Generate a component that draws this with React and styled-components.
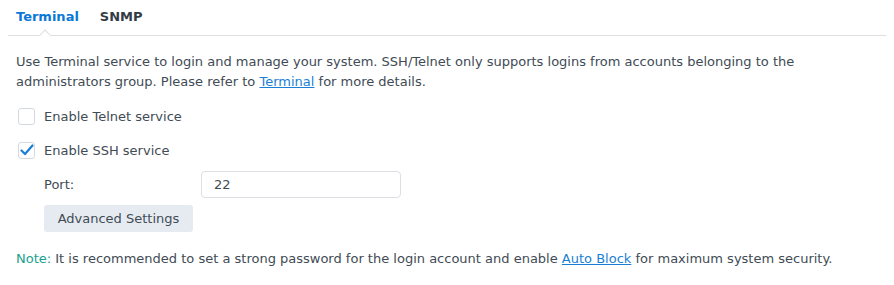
import React from "react";
import styled, { createGlobalStyle } from "styled-components";

const Global = createGlobalStyle`
  html, body { margin: 0; padding: 0; background: #fff; }
  body { font-family: "DejaVu Sans", Verdana, sans-serif; font-size: 13px; color: #414b55; }
`;

const Page = styled.div`
  width: 894px;
  height: 285px;
  padding: 0 8px;
  box-sizing: border-box;
`;

const TabBar = styled.div`
  display: flex;
  gap: 21px;
  height: 36px;
  padding: 8px 8px 0;
  box-sizing: border-box;
  border-bottom: 1px solid #dde0e3;
  width: 878px;
`;

const Tab = styled.div`
  position: relative;
  font-weight: bold;
  font-size: 13px;
  line-height: 18px;
  color: ${(p) => (p.$active ? "#0a78d6" : "#333c45")};
`;

const Notch = styled.span`
  position: absolute;
  left: 25px;
  top: 23px;
  width: 7px;
  height: 7px;
  background: #fff;
  border-left: 1px solid #dde0e3;
  border-top: 1px solid #dde0e3;
  transform: rotate(45deg);
`;

const Body = styled.div`
  padding: 16px 8px 0;
  display: flex;
  flex-direction: column;
`;

const Para = styled.p`
  margin: 0;
  line-height: 20px;
  width: 860px;
`;

const Link = styled.a`
  color: #1a7fd4;
  text-decoration: underline;
`;

const CheckRow = styled.label`
  display: flex;
  align-items: center;
  gap: 9px;
  height: 20px;
  margin-top: ${(p) => p.$mt}px;
  padding-left: 2px;
`;

const Box = styled.span`
  width: 15px;
  height: 15px;
  border: 1px solid #d4d9de;
  border-radius: 3px;
  display: flex;
  align-items: center;
  justify-content: center;
  background: #fff;
`;

const FieldRow = styled.div`
  display: flex;
  align-items: center;
  margin-top: 11px;
  padding-left: 28px;
`;

const FieldLabel = styled.span`
  width: 157px;
`;

const Input = styled.div`
  display: flex;
  align-items: center;
  padding-left: 12px;
  box-sizing: border-box;
  width: 200px;
  height: 27px;
  border: 1px solid #dcdfe3;
  border-radius: 4px;
`;

const Button = styled.button`
  margin: 7px 0 0 28px;
  align-self: flex-start;
  width: 149px;
  height: 27px;
  border: none;
  border-radius: 3px;
  background: #e6ebf1;
  font-family: inherit;
  font-size: 13px;
  color: #414b55;
`;

const Note = styled.p`
  margin: 17px 0 0;
  line-height: 20px;
`;

const NoteLabel = styled.span`
  color: #1aa192;
`;

export default function App() {
  return (
    <>
      <Global />
      <Page>
        <TabBar>
          <Tab $active>
            Terminal
            <Notch />
          </Tab>
          <Tab>SNMP</Tab>
        </TabBar>
        <Body>
          <Para>
            Use Terminal service to login and manage your system. SSH/Telnet only supports logins from accounts belonging to the
            administrators group. Please refer to <Link href="#">Terminal</Link> for more details.
          </Para>
          <CheckRow $mt={14}>
            <Box />
            Enable Telnet service
          </CheckRow>
          <CheckRow $mt={14}>
            <Box>
              <svg width="14" height="12" viewBox="0 0 14 12">
                <path d="M1.5 6.5 L5 10 L12.5 1.5" fill="none" stroke="#1a7fd4" strokeWidth="2.2" strokeLinecap="round" strokeLinejoin="round" />
              </svg>
            </Box>
            Enable SSH service
          </CheckRow>
          <FieldRow>
            <FieldLabel>Port:</FieldLabel>
            <Input>22</Input>
          </FieldRow>
          <Button>Advanced Settings</Button>
          <Note>
            <NoteLabel>Note:</NoteLabel> It is recommended to set a strong password for the login account and enable{" "}
            <Link href="#">Auto Block</Link> for maximum system security.
          </Note>
        </Body>
      </Page>
    </>
  );
}
